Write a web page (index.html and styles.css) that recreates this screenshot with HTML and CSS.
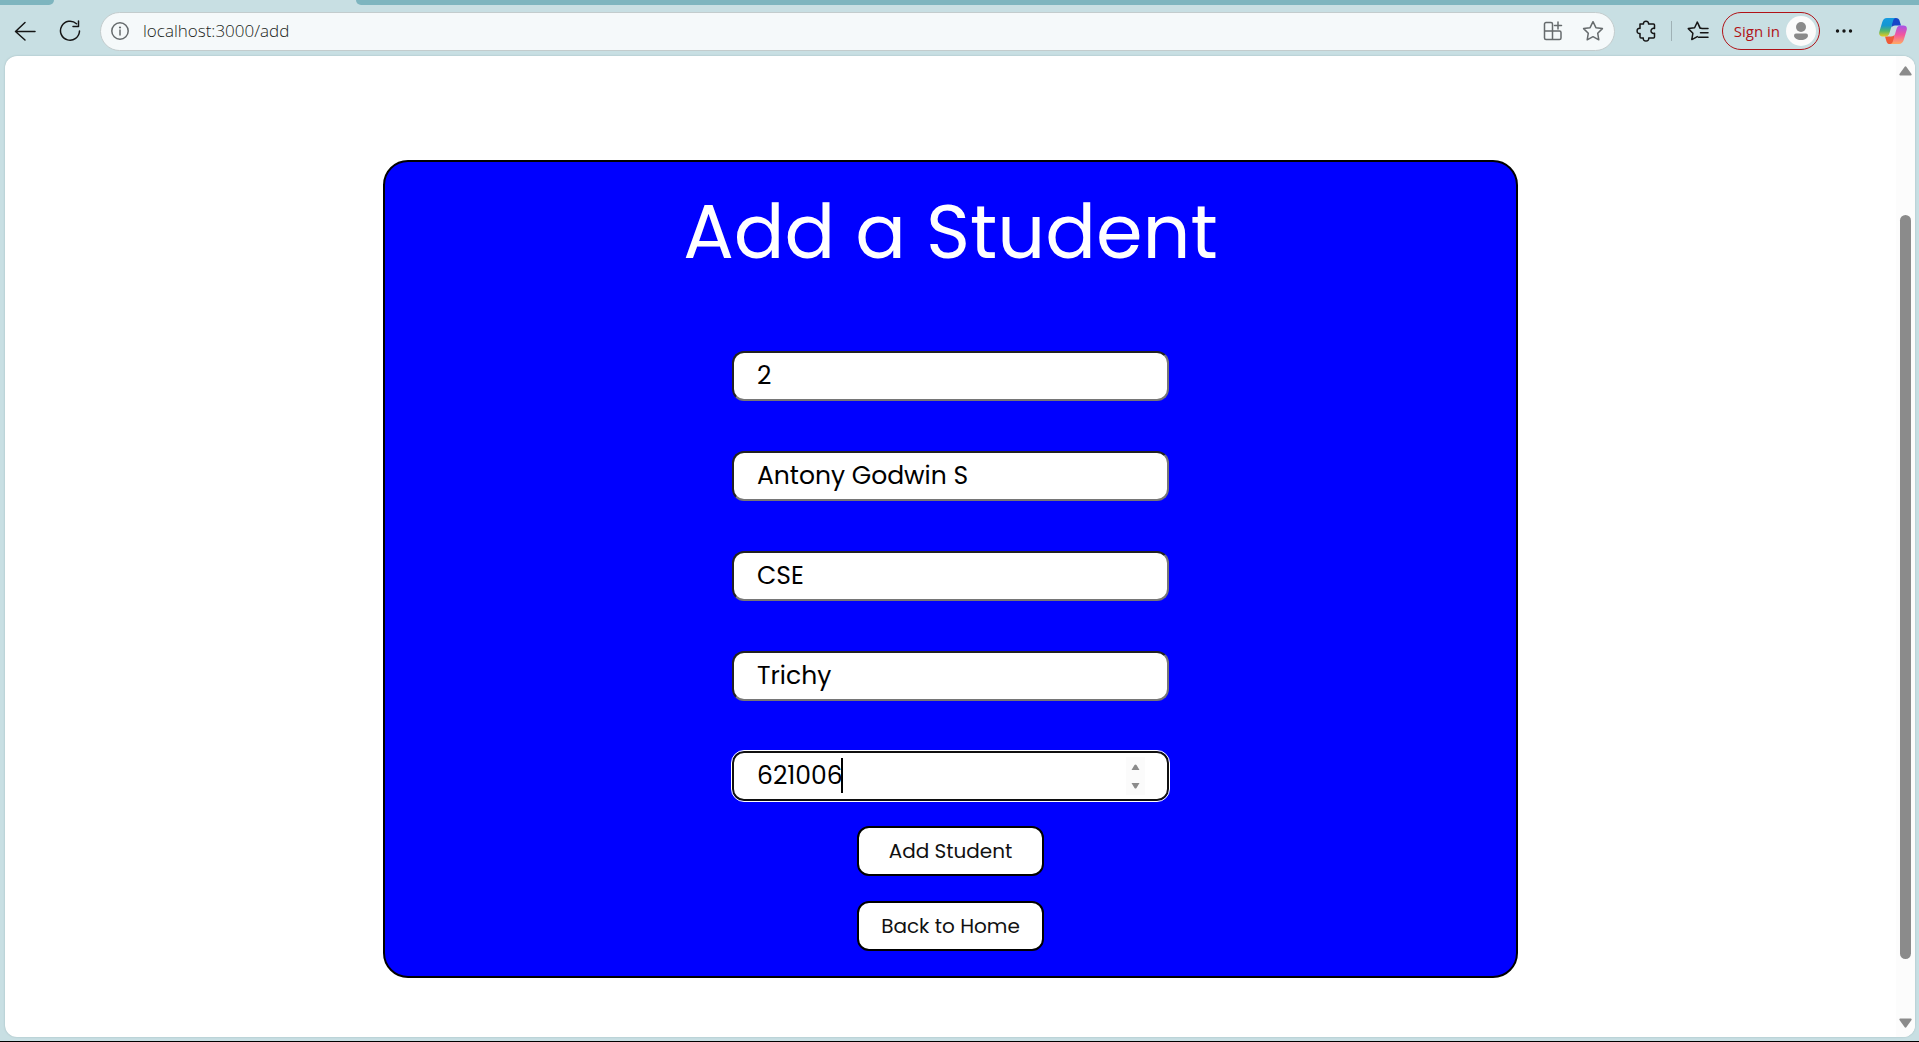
FILE: index.html
```html
<!DOCTYPE html>
<html lang="en">
<head>
<meta charset="utf-8">
<title>Add a Student</title>
<link rel="stylesheet" href="styles.css">
</head>
<body>
<div class="tabs"><div class="tab-edge tab-edge-left"></div><div class="tab-edge tab-edge-right"></div></div>
<header class="toolbar">
  <button class="tool" aria-label="Back">
    <svg width="22" height="22" viewBox="0 0 22 22"><path d="M21 11.500H1.500M11 2.500l-9.500 9 9.500 8.500"/></svg>
  </button>
  <button class="tool" aria-label="Refresh">
    <svg width="22" height="22" viewBox="0 0 22 22"><path d="M17.500 3.800A9.500 9.500 0 1 0 20.500 11M19.500 1v5.500H14"/></svg>
  </button>
  <div class="address">
    <svg class="info" width="18" height="18" viewBox="0 0 18 18"><circle cx="9" cy="9" r="8.200"/><path d="M9 8v5"/><circle class="dot" cx="9" cy="5.500" r="1.100"/></svg>
    <input class="url" type="text" aria-label="Address" value="localhost:3000/add">
    <button class="tool muted" aria-label="Install app">
      <svg width="20" height="20" viewBox="0 0 20 20"><path d="M9.500 10V3a1.500 1.500 0 0 0-1.500-1.500H3A1.500 1.500 0 0 0 1.500 3v14A1.500 1.500 0 0 0 3 18.500h13.500A1.500 1.500 0 0 0 18 17v-5.500a1.500 1.500 0 0 0-1.500-1.500h-15M9.500 10v8.500M15 1v7M11.500 4.500h7"/></svg>
    </button>
    <button class="tool muted" aria-label="Add to favorites">
      <svg width="22" height="22" viewBox="0 0 22 22"><path d="M11 1.700l2.900 6 6.500.9-4.700 4.600 1.100 6.600L11 16.700l-5.800 3.100 1.100-6.600L1.600 8.600l6.500-.9z"/></svg>
    </button>
  </div>
  <div class="actions">
    <button class="tool" aria-label="Extensions">
      <svg width="20" height="22" viewBox="0 0 20 22"><path d="M4 4h3.500C7.200 2.300 8.300 1.200 10 1.200S12.800 2.300 12.500 4H17.500a1 1 0 0 1 1 1v3.500c-2-.5-3.500.6-3.500 2.400s1.500 2.900 3.500 2.400V17a1 1 0 0 1-1 1H12.700c.4 1.900-.9 2.900-2.700 2.900S6.900 19.900 7.300 18H5a1 1 0 0 1-1-1v-3.600c-1.800.4-2.900-.7-2.900-2.500S2.200 8 4 8.400z"/></svg>
    </button>
    <span class="divider"></span>
    <button class="tool" aria-label="Favorites">
      <svg width="22" height="22" viewBox="0 0 22 22"><path d="M13.500 8.200H13L10.300 2 7.600 7.700l-6.300.9 4.600 4.600-1.100 6.400 5.500-3M10.300 2l2.800 5.900 2 .5H21M13.500 12.700H21M11.500 17.200H21"/></svg>
    </button>
    <button class="signin">Sign in
      <svg class="avatar" width="30" height="30" viewBox="0 0 30 30"><circle cx="15" cy="15" r="15"/><circle class="person" cx="15" cy="11" r="5"/><path class="person" d="M10 17.500h10a2 2 0 0 1 2 2c0 2.700-3 4.500-7 4.500s-7-1.800-7-4.500a2 2 0 0 1 2-2z"/></svg>
    </button>
    <button class="tool" aria-label="Settings and more">
      <svg class="dots" width="18" height="18" viewBox="0 0 18 18"><circle cx="2.500" cy="9" r="1.700"/><circle cx="9" cy="9" r="1.700"/><circle cx="15.500" cy="9" r="1.700"/></svg>
    </button>
    <button class="tool copilot" aria-label="Copilot">
      <svg width="28" height="26" viewBox="0 0 28 26">
        <defs>
          <linearGradient id="cool" x1="0" y1="0" x2="0" y2="1"><stop offset="0" stop-color="#159be0"/><stop offset=".4" stop-color="#1696d2"/><stop offset=".7" stop-color="#54b66b"/><stop offset="1" stop-color="#e9cb20"/></linearGradient>
          <linearGradient id="warm" x1="0" y1="0" x2="0" y2="1"><stop offset="0" stop-color="#a653e8"/><stop offset=".5" stop-color="#f2569f"/><stop offset="1" stop-color="#ffab62"/></linearGradient>
        </defs>
        <path fill="#1746c8" d="M12 0h5c2 0 3 1 3.500 2.600L22 7.500h-6c-2 0-3 1-3.500 2z"/>
        <path fill="#ef5a38" d="M16 26h-5c-2 0-3-1-3.500-2.600L6 18.500h6c2 0 3-1 3.500-2z"/>
        <path fill="url(#cool)" d="M8 0h9c-1.500 0-2.300 1-2.900 2.800L10.500 15c-.7 2.200-1.700 3.500-4 3.500H3.500C1 18.500-.4 16.800.3 14L3.200 4.200C4 1.500 5.500 0 8 0z"/>
        <path fill="url(#warm)" d="M20 26h-9c1.500 0 2.300-1 2.900-2.800L17.500 11c.7-2.200 1.700-3.500 4-3.500h3c2.500 0 3.900 1.700 3.200 4.500l-2.900 9.800C24 24.500 22.500 26 20 26z"/>
      </svg>
    </button>
  </div>
</header>
<div class="viewport">
  <main class="page">
    <form class="card">
      <h1>Add a Student</h1>
      <div class="fields">
        <input class="field" type="number" aria-label="Roll number" value="2">
        <input class="field" type="text" aria-label="Name" value="Antony Godwin S">
        <input class="field" type="text" aria-label="Department" value="CSE">
        <input class="field" type="text" aria-label="City" value="Trichy">
        <div class="active-field">
          <input class="field field-active" type="number" aria-label="Pincode" value="621006">
          <span class="caret"></span>
          <svg class="spinner" width="19" height="38" viewBox="0 0 19 38"><rect width="19" height="38"/><path d="M5.500 13l3-5q1-1.200 2 0l3 5zM5.500 26h8l-3 5q-1 1.200-2 0z"/></svg>
        </div>
      </div>
      <button class="btn" type="submit">Add Student</button>
      <button class="btn" type="button">Back to Home</button>
    </form>
  </main>
  <div class="scrollbar">
    <svg width="13" height="10" viewBox="0 0 13 10"><path d="M1 9.500q-1-.5-.5-1.500l5-7q1-1.300 2 0l5 7q.5 1-.5 1.500z"/></svg>
    <div class="track"><div class="thumb"></div></div>
    <svg width="13" height="10" viewBox="0 0 13 10"><path d="M1 .5q-1 .5-.5 1.500l5 7q1 1.300 2 0l5-7q.5-1-.5-1.500z"/></svg>
  </div>
</div>
</body>
</html>
```
FILE: styles.css
```css
* { box-sizing: border-box; }

body {
  display: flex;
  flex-direction: column;
  min-height: 100vh;
  margin: 0;
  background: #c8dfe3;
  border-bottom: 1px solid #000;
  font-family: Poppins, Inter, sans-serif;
}

button { font: inherit; cursor: pointer; }

/* Browser chrome */
.tabs { display: flex; justify-content: space-between; height: 5px; }
.tab-edge { background: #7eb5bf; }
.tab-edge-left { width: 54px; border-bottom-right-radius: 8px; }
.tab-edge-right { width: calc(100% - 356px); border-bottom-left-radius: 8px; }

.toolbar {
  display: flex;
  align-items: center;
  height: 51px;
  padding: 0 12px 0 14px;
}

.tool {
  display: flex;
  padding: 0;
  border: 0;
  background: none;
}
.tool + .tool { margin-left: 23px; }
.tool svg, .info { fill: none; stroke: #151515; stroke-width: 1.5; stroke-linejoin: round; stroke-linecap: round; }
.tool.muted svg, .info { stroke: #666b6d; }
.tool .dots { fill: #151515; stroke: none; }
.copilot svg { stroke: none; }
.info .dot { fill: #666b6d; stroke: none; }

.address {
  display: flex;
  flex: 1;
  align-items: center;
  height: 39px;
  margin: 1px 0 0 19px;
  padding: 0 10px;
  border: 1px solid #c3cccd;
  border-radius: 20px;
  background: #f5f9fa;
}
.url {
  flex: 1;
  min-width: 0;
  margin-left: 14px;
  padding: 0;
  border: 0;
  background: none;
  color: #1b1f21;
  font: 300 17px/24px "Open Sans", "Noto Sans", sans-serif;
}
.address .tool + .tool { margin-left: 19px; }

.actions { display: flex; align-items: center; gap: 15px; margin-left: 21px; }
.actions .tool + .tool { margin-left: 11px; }
.divider { width: 1px; height: 20px; background: #9fb1b5; }
.signin {
  display: flex;
  align-items: center;
  gap: 6px;
  height: 38px;
  margin-left: -2px;
  padding: 0 3px 0 11px;
  border: 1px solid #b01217;
  border-radius: 19px;
  background: none;
  color: #b01217;
  font: 15px/20px "Open Sans", "Noto Sans", sans-serif;
}
.avatar { fill: #fbfbfb; }
.avatar .person { fill: #8a8a8a; }

/* Page area */
.viewport {
  display: flex;
  flex: 1;
  margin: 0 4px 4px 5px;
  border-radius: 12px;
  background: #fff;
  box-shadow: 0 0 2px #9db5b9;
  overflow: hidden;
}
.page { flex: 1; padding: 104px 0 40px; }

.card {
  display: flex;
  flex-direction: column;
  align-items: center;
  gap: 25px;
  width: 60%;
  margin: 0 auto;
  padding: 30px 20px 25px;
  border: 2px solid #000;
  border-radius: 25px;
  background: #00f;
}
h1 {
  margin: 0 0 54px;
  color: #fff;
  font-size: 75px;
  font-weight: 400;
  line-height: 80px;
}
.fields { display: flex; flex-direction: column; gap: 50px; width: 437px; max-width: 100%; }
.field {
  width: 100%;
  height: 50px;
  padding: 0 23px;
  border: 2px solid;
  border-color: #222 #767676 #767676 #222;
  border-radius: 12px;
  background: #fff;
  color: #000;
  font: 25px/36px Poppins, Inter, sans-serif;
  appearance: textfield;
}
.active-field { position: relative; display: flex; }
.field-active { border-color: #101010; outline: 1px solid #fff; }
.field::-webkit-inner-spin-button { appearance: none; margin: 0; }
.caret { position: absolute; top: 7px; left: 109px; width: 2px; height: 35px; background: #000; }
.spinner { position: absolute; top: 6px; right: 24px; fill: #8b8b8b; }
.spinner rect { fill: #fbfbfb; }

.btn {
  width: 187px;
  height: 50px;
  padding: 0;
  border: 2px solid #000;
  border-radius: 12px;
  background: #fff;
  color: #111;
  font-size: 20px;
}

/* Scrollbar */
.scrollbar {
  display: flex;
  flex-direction: column;
  align-items: center;
  width: 19px;
  padding: 10px 0 9px;
  background: #fcfcfc;
  fill: #8b8b8b;
}
.track { flex: 1; display: flex; flex-direction: column; }
.thumb { width: 11px; height: 79%; margin-top: 139px; border-radius: 6px; background: #8b8b8b; }
```
